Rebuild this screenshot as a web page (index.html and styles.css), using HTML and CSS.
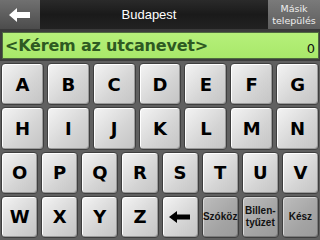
FILE: index.html
```html
<!DOCTYPE html>
<html>
<head>
<meta charset="utf-8">
<link rel="stylesheet" href="styles.css">
</head>
<body>
<div class="screen">
  <div class="topbar">
    <div class="back">
      <svg width="22" height="14" viewBox="0 0 22 14"><path d="M0 7 L8 0 L8 4 L21 4 L21 10 L8 10 L8 14 Z" fill="#fff"/></svg>
    </div>
    <div class="title">Budapest</div>
    <div class="other">Másik<br>település</div>
  </div>
  <div class="inputwrap">
    <div class="input">
      <span class="prompt">&lt;Kérem az utcanevet&gt;</span>
      <span class="count">0</span>
    </div>
  </div>
  <div class="kbd">
    <div class="row r7">
      <div class="key">A</div><div class="key">B</div><div class="key">C</div><div class="key">D</div><div class="key">E</div><div class="key">F</div><div class="key">G</div>
    </div>
    <div class="row r7">
      <div class="key">H</div><div class="key">I</div><div class="key">J</div><div class="key">K</div><div class="key">L</div><div class="key">M</div><div class="key">N</div>
    </div>
    <div class="row r8">
      <div class="key">O</div><div class="key">P</div><div class="key">Q</div><div class="key">R</div><div class="key">S</div><div class="key">T</div><div class="key">U</div><div class="key">V</div>
    </div>
    <div class="row r8">
      <div class="key">W</div><div class="key">X</div><div class="key">Y</div><div class="key">Z</div>
      <div class="key">
        <svg width="22" height="12" viewBox="0 0 22 12"><path d="M0 6 L8 0 L8 3.5 L21 3.5 L21 8.5 L8 8.5 L8 12 Z" fill="#000"/></svg>
      </div>
      <div class="key fn">Szóköz</div>
      <div class="key fn">Billen-<br>tyűzet</div>
      <div class="key fn">Kész</div>
    </div>
  </div>
</div>
</body>
</html>
```
FILE: styles.css
```css
html, body {
  margin: 0;
  padding: 0;
  background: #5e5e5e;
}
.screen {
  width: 320px;
  height: 240px;
  overflow: hidden;
  display: flex;
  flex-direction: column;
  background: #5e5e5e;
}
.topbar {
  height: 29px;
  display: flex;
  background: linear-gradient(#2a2a2a, #1a1a1a 50%, #222);
  border-bottom: 2px solid #3a3a3a;
}
.back {
  width: 40px;
  display: flex;
  align-items: center;
  justify-content: center;
  background: linear-gradient(#707070, #4c4c4c);
}
.title {
  flex: 1;
  display: flex;
  align-items: center;
  justify-content: center;
  color: #fff;
  font-family: "Liberation Sans", Arial, sans-serif;
  font-size: 13px;
  padding-right: 10px;
}
.other {
  width: 52px;
  display: flex;
  align-items: center;
  justify-content: center;
  text-align: center;
  background: linear-gradient(#7a7a7a, #5e5e5e);
  color: #eee;
  font-family: "DejaVu Sans", sans-serif;
  font-size: 9.5px;
  line-height: 12px;
}
.inputwrap {
  padding: 1px 1px 2px 2px;
  background: #3c3c3c;
}
.input {
  height: 25px;
  border: 1px solid #4f6a40;
  background: linear-gradient(#b6f07a, #a8e86a);
  display: flex;
  align-items: center;
  justify-content: space-between;
  padding: 0 3px 0 2px;
}
.prompt {
  font-family: "DejaVu Sans", Verdana, sans-serif;
  font-weight: bold;
  font-size: 16px;
  color: #2e5a22;
  letter-spacing: -0.2px;
}
.count {
  font-family: "DejaVu Sans", sans-serif;
  font-size: 13px;
  color: #111;
  padding-top: 5px;
}
.kbd {
  flex: 1;
  display: flex;
  flex-direction: column;
  gap: 2px;
  padding: 2px 1px 2px 1px;
  background: #606060;
}
.row {
  flex: 1;
  display: flex;
  gap: 3px;
}
.key {
  flex: 1;
  display: flex;
  align-items: center;
  justify-content: center;
  border-radius: 4px;
  border: 1px solid #3e3e3e;
  background: linear-gradient(135deg, #f4f4f4, #d4d4d4 60%, #c4c4c4);
  box-shadow: inset 1px 1px 0 #fff, inset -1px -1px 0 #9a9a9a;
  font-family: "DejaVu Sans", Verdana, sans-serif;
  font-weight: bold;
  font-size: 18px;
  color: #000;
}
.key.fn {
  background: linear-gradient(135deg, #bdbdbd, #a4a4a4 60%, #9a9a9a);
  box-shadow: inset 1px 1px 0 #d8d8d8, inset -1px -1px 0 #7a7a7a;
  font-family: "Liberation Sans", Arial, sans-serif;
  font-size: 10px;
  line-height: 12px;
  text-align: center;
  color: #111;
}
```
